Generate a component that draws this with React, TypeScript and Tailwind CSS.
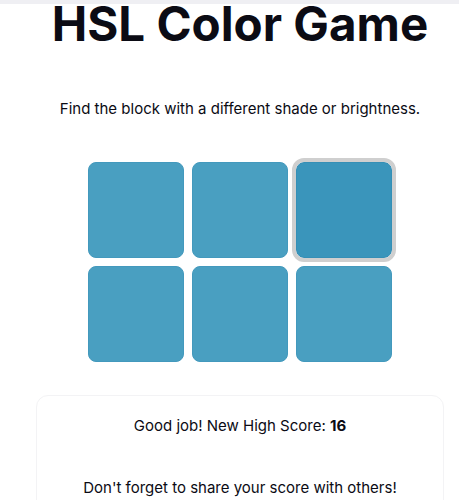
export default function App() {
  const blocks = [0, 1, 2, 3, 4, 5];
  const odd = 2;

  return (
    <div className="w-full overflow-hidden bg-white" style={{ fontFamily: "Inter, 'Noto Sans', sans-serif" }}>
      <div className="h-[4px] w-full bg-[#efeff3]" />
      <div className="w-[480px] flex flex-col items-center text-[#0b0b14]">
        <h1 className="text-[47.5px] font-bold leading-none -mt-[4px]">HSL Color Game</h1>
        <p className="mt-[49px] text-[15px] leading-6">Find the block with a different shade or brightness.</p>
        <div className="mt-[41px] grid grid-cols-3 gap-2">
          {blocks.map(i => (
            <div
              key={i}
              className={
                i === odd
                  ? "w-24 h-24 rounded-lg bg-[#3a95bb] border border-[#358fb6] outline-4 outline-[#cfcfcf]"
                  : "w-24 h-24 rounded-lg bg-[#499fc1] border border-[#4399bd]"
              }
            />
          ))}
        </div>
        <div className="mt-[33px] w-[408px] rounded-xl border border-[#f3f3f5] flex flex-col items-center pt-[18px] pb-6">
          <p className="text-[15px] leading-6">
            Good job! New High Score: <span className="font-bold">16</span>
          </p>
          <p className="mt-[38px] text-[15px] leading-6">Don't forget to share your score with others!</p>
        </div>
      </div>
    </div>
  );
}
